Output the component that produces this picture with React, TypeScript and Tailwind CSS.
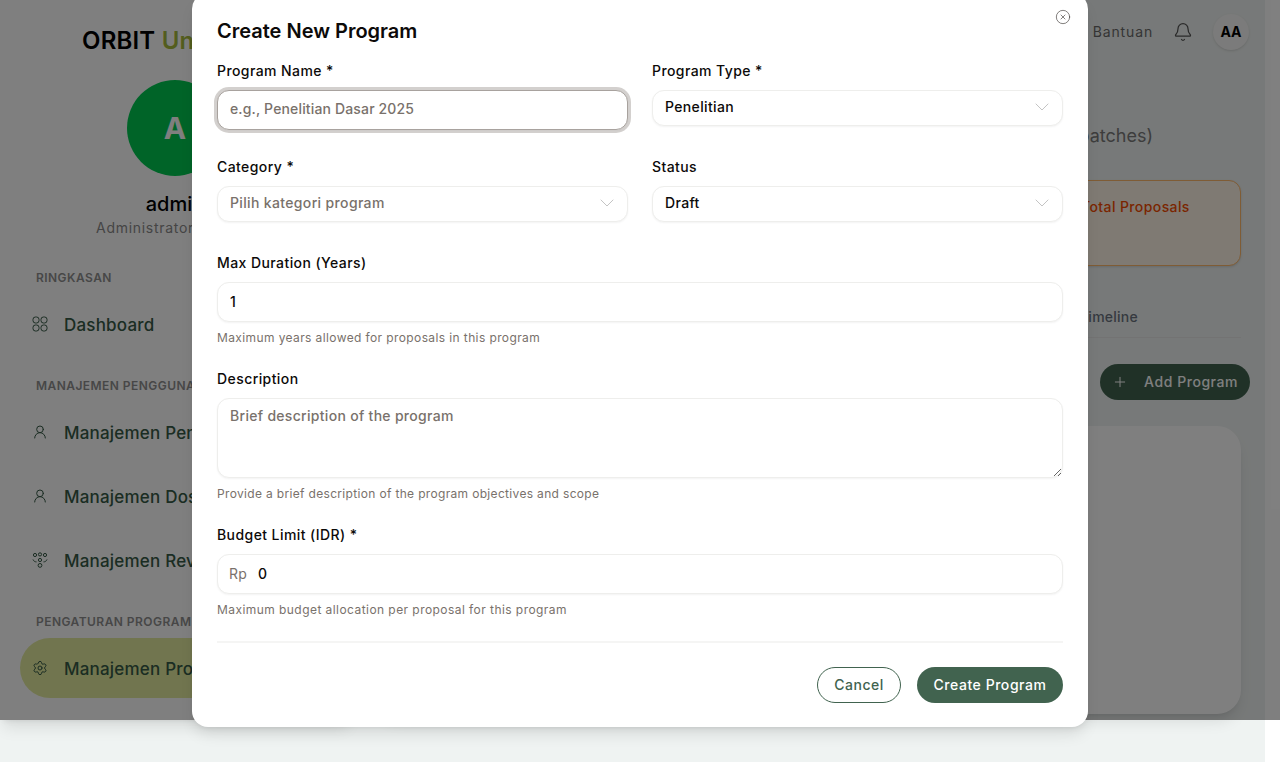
import { Bell, ChevronDown, CircleHelp, CircleX, Plus, Settings, UserRound } from "lucide-react";

function DashIcon() {
    return (
        <svg viewBox="0 0 16 16" className="h-4 w-4" fill="none" stroke="currentColor" strokeWidth="1">
            <rect x="1" y="1" width="6" height="6" rx="2.4" />
            <rect x="9" y="1" width="6" height="6" rx="2.4" />
            <rect x="1" y="9" width="6" height="6" rx="2.4" />
            <rect x="9" y="9" width="6" height="6" rx="2.4" />
        </svg>
    );
}

function TeamIcon() {
    return (
        <svg viewBox="0 0 16 16" className="h-4 w-4" fill="none" stroke="currentColor" strokeWidth="1">
            <circle cx="3" cy="3" r="1.6" />
            <circle cx="8" cy="2.4" r="1.6" />
            <circle cx="13" cy="3" r="1.6" />
            <circle cx="8" cy="8" r="1.6" />
            <circle cx="8" cy="13.4" r="1.9" />
            <path d="M1 7.5c.6 1.6 2 2.4 3.5 2.4M15 7.5c-.6 1.6-2 2.4-3.5 2.4" />
        </svg>
    );
}

function NavItem({ icon, label, active }: { icon: React.ReactNode; label: string; active?: boolean }) {
    return (
        <div className={`flex h-[60px] items-center gap-4 rounded-full px-3 text-[17px] font-medium text-[#365a46] ${active ? "bg-[#e3eb9f]" : ""}`}>
            {icon}
            <span className="pt-[3px] tracking-[0.2px]">{label}</span>
        </div>
    );
}

function Section({ title, children }: { title: string; children: React.ReactNode }) {
    return (
        <div className="mb-6 flex flex-col gap-1">
            <p className="mb-1 h-4 px-4 text-xs leading-4 font-semibold tracking-[0.45px] text-[#8f8f8f]">{title}</p>
            {children}
        </div>
    );
}

function Sidebar() {
    return (
        <aside className="flex h-[720px] w-[350px] shrink-0 flex-col overflow-hidden bg-white px-5 shadow-lg">
            <h1 className="mt-[25px] ml-[62px] text-2xl leading-8 font-semibold tracking-[0.2px] text-black">
                ORBIT <span className="text-[#a7bb3c]">Unggulan</span>
            </h1>
            <div className="mt-[23px] flex flex-col items-center">
                <div className="flex h-24 w-24 items-center justify-center rounded-full bg-green-500 text-3xl font-bold text-white">A</div>
                <p className="mt-[14px] text-xl leading-7 font-medium text-black">admin</p>
                <p className="pb-[2px] pl-[6px] text-sm leading-5 tracking-[0.7px] text-[#8a8a8a]">Administrator Program</p>
            </div>
            <div className="mt-[30px]">
                <Section title="RINGKASAN">
                    <NavItem icon={<DashIcon />} label="Dashboard" />
                </Section>
                <Section title="MANAJEMEN PENGGUNA">
                    <NavItem icon={<UserRound className="h-4 w-4" strokeWidth={1.5} />} label="Manajemen Pengguna" />
                    <NavItem icon={<UserRound className="h-4 w-4" strokeWidth={1.5} />} label="Manajemen Dosen" />
                    <NavItem icon={<TeamIcon />} label="Manajemen Reviewer" />
                </Section>
                <Section title="PENGATURAN PROGRAM">
                    <NavItem icon={<Settings className="h-4 w-4" strokeWidth={1.5} />} label="Manajemen Program" active />
                </Section>
            </div>
        </aside>
    );
}

function Main() {
    return (
        <main className="flex h-[720px] min-w-0 flex-1 flex-col">
            <header className="flex h-16 items-center justify-end gap-5 pr-4">
                <div className="flex items-center gap-1.5 text-sm tracking-[0.85px] text-[#6b6b6b]">
                    <CircleHelp className="h-4 w-4" />
                    <span>Bantuan</span>
                </div>
                <Bell className="h-5 w-5 text-[#555555]" strokeWidth={1.5} />
                <div className="flex h-9 w-9 items-center justify-center rounded-full bg-[#f7f7f6] text-sm font-bold text-black shadow-sm">AA</div>
            </header>
            <div className="flex flex-1 flex-col px-6">
                <p className="mt-[58px] h-7 pr-[88px] text-right text-lg leading-7 text-[#7a7a7a]">Kelola program hibah (batches)</p>
                <div className="mt-[30px] flex justify-end">
                    <div className="h-[86px] w-[177px] rounded-xl border border-orange-300 bg-[#fff5e6] px-4 py-[16px] text-sm leading-5 font-medium tracking-[0.4px] text-orange-600 shadow-sm">Total Proposals</div>
                </div>
                <div className="mt-[41px] border-b border-[#e7e7e7] pb-2.5 text-right text-sm leading-5">
                    <span className="mr-[103px] font-medium tracking-[0.25px] text-[#6b7280]">Timeline</span>
                </div>
                <div className="mt-[26px] -mr-[9px] flex justify-end">
                    <button className="flex h-9 items-center gap-4 rounded-full bg-[#41634f] px-3 text-sm font-medium tracking-[0.55px] text-white">
                        <Plus className="h-4 w-4" strokeWidth={1.5} />
                        Add Program
                    </button>
                </div>
                <div className="mt-[26px] h-[288px] rounded-3xl bg-white shadow-lg" />
            </div>
        </main>
    );
}

function Field({ label, className, children }: { label: string; className?: string; children: React.ReactNode }) {
    return (
        <div className={className}>
            <label className="mb-[9px] block text-sm leading-5 font-medium tracking-[0.42px] text-[#0c0a09]">{label}</label>
            {children}
        </div>
    );
}

function SelectBox({ value, muted }: { value: string; muted?: boolean }) {
    return (
        <button className={`flex h-9 w-full items-center justify-between rounded-xl border border-[#eeeeec] bg-white px-3 pb-[3px] text-sm font-medium tracking-[0.35px] shadow-xs ${muted ? "text-[#79716b]" : "text-[#0c0a09]"}`}>
            {value}
            <ChevronDown className="-mr-1 h-6 w-6 text-[#c4c4c4]" strokeWidth={1} />
        </button>
    );
}

function Help({ className, children }: { className: string; children: React.ReactNode }) {
    return <p className={`mt-2 text-xs leading-4 text-[#79716b] ${className}`}>{children}</p>;
}

const inputClass = "h-10 w-full rounded-xl border border-[#eeeeec] bg-white px-3 pb-[2px] text-sm font-medium tracking-[0.35px] text-[#0c0a09] shadow-xs outline-none placeholder:text-[#79716b]";

function Modal() {
    return (
        <div className="relative flex w-[896px] shrink-0 flex-col rounded-2xl bg-white p-6 shadow-lg">
            <button className="absolute top-4 right-[17px] text-[#44403c]">
                <CircleX className="h-4 w-4" strokeWidth={1} />
            </button>
            <h2 className="pl-px text-xl leading-7 font-semibold text-[#0c0a09]">Create New Program</h2>
            <div className="mt-4 px-px">
                <div className="grid grid-cols-2 gap-x-6 gap-y-[27px]">
                    <Field label="Program Name *" className="h-[69px]">
                        <input className="h-10 w-full rounded-xl border border-[#a8a29e] bg-white px-3 pb-1 text-sm font-medium tracking-[0.15px] shadow-xs ring-[3px] ring-[#a8a29e]/50 outline-none placeholder:text-[#79716b]" placeholder="e.g., Penelitian Dasar 2025" />
                    </Field>
                    <Field label="Program Type *" className="h-[69px]">
                        <SelectBox value="Penelitian" />
                    </Field>
                    <Field label="Category *" className="h-[69px]">
                        <SelectBox value="Pilih kategori program" muted />
                    </Field>
                    <Field label="Status" className="h-[69px]">
                        <SelectBox value="Draft" />
                    </Field>
                </div>
                <Field label="Max Duration (Years)" className="mt-[27px]">
                    <input className={inputClass} defaultValue="1" />
                    <Help className="tracking-[0.39px]">Maximum years allowed for proposals in this program</Help>
                </Field>
                <Field label="Description" className="mt-[23px]">
                    <textarea className="block h-20 w-full rounded-xl border border-[#eeeeec] bg-white px-3 py-[7px] text-sm font-medium tracking-[0.3px] shadow-xs outline-none placeholder:text-[#79716b]" placeholder="Brief description of the program" />
                    <Help className="tracking-[0.33px]">Provide a brief description of the program objectives and scope</Help>
                </Field>
                <Field label="Budget Limit (IDR) *" className="mt-[23px]">
                    <div className="flex h-10 items-center rounded-xl border border-[#eeeeec] bg-white pr-3 pb-px pl-[11px] text-sm tracking-[0.35px] shadow-xs">
                        <span className="w-[29px] text-[#79716b]">Rp</span>
                        <input className="min-w-0 flex-1 font-medium text-[#0c0a09] outline-none" defaultValue="0" />
                    </div>
                    <Help className="tracking-[0.44px]">Maximum budget allocation per proposal for this program</Help>
                </Field>
                <div className="mt-[23px] flex justify-end gap-4 border-t-2 border-[#f5f5f4] pt-6">
                    <button className="h-9 w-[84px] rounded-full border border-[#41634f] bg-white text-sm font-medium tracking-[0.5px] text-[#41634f]">Cancel</button>
                    <button className="h-9 w-[146px] rounded-full bg-[#41634f] text-sm font-medium tracking-[0.55px] text-white">Create Program</button>
                </div>
            </div>
        </div>
    );
}

export default function App() {
    return (
        <div className="relative h-[762px] overflow-hidden bg-white font-['Inter',sans-serif]">
            <div className="flex h-full w-[1265px] items-start bg-[#eff3f2]">
                <Sidebar />
                <Main />
            </div>
            <div className="absolute top-0 left-0 flex h-[720px] w-[1280px] items-center justify-center bg-black/50">
                <Modal />
            </div>
        </div>
    );
}
